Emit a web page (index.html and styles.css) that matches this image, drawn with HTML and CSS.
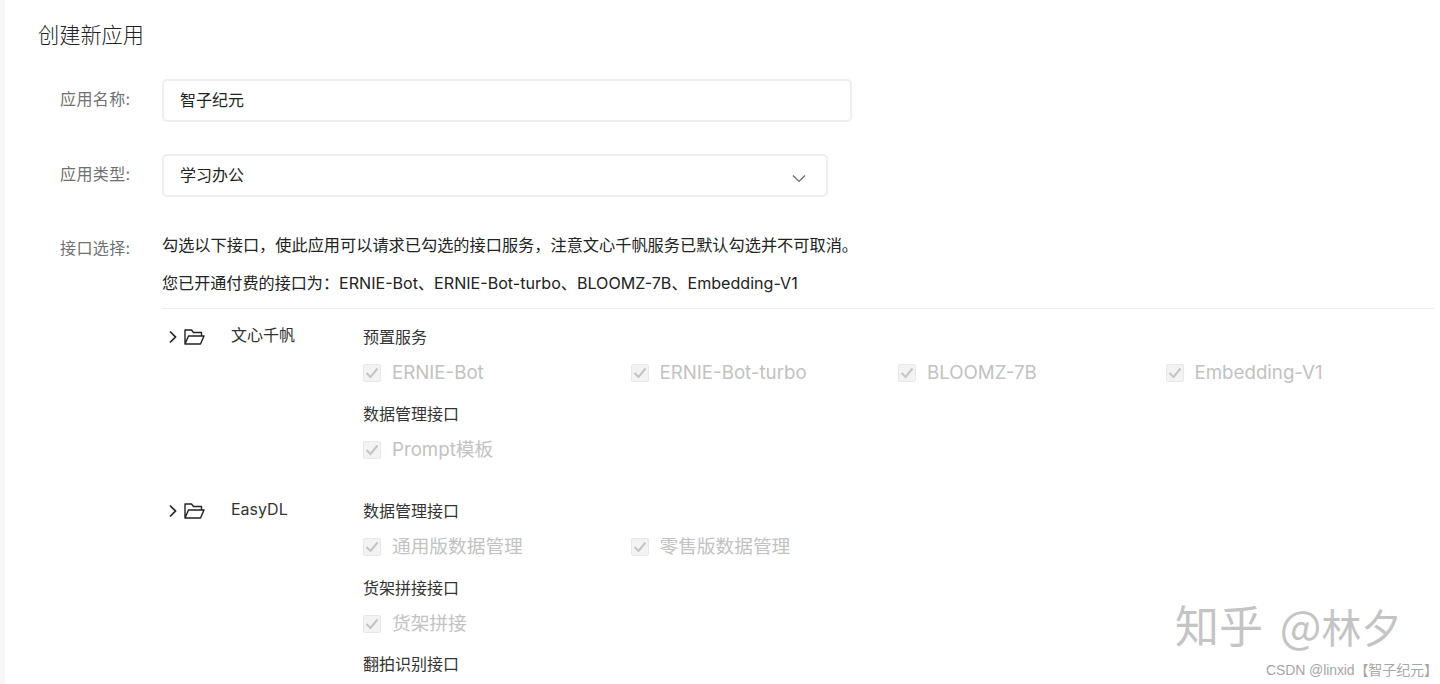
FILE: index.html
```html
<!DOCTYPE html>
<html lang="zh">
<head>
<meta charset="utf-8">
<title>创建新应用</title>
<link rel="stylesheet" href="styles.css">
</head>
<body>
<main class="page">
  <h1 class="title">创建新应用</h1>
  <div class="form-row name-row">
    <label class="label">应用名称:</label>
    <div class="input name-input">智子纪元</div>
  </div>
  <div class="form-row type-row">
    <label class="label">应用类型:</label>
    <div class="input type-input">学习办公
      <svg class="caret" width="14" height="9" viewBox="0 0 14 9"><path d="M1 1.5 7 7.5 13 1.5" fill="none" stroke="#666" stroke-width="1.2"/></svg>
    </div>
  </div>
  <div class="form-row api-row">
    <label class="label api-label">接口选择:</label>
    <div class="api-body">
      <p class="note first">勾选以下接口，使此应用可以请求已勾选的接口服务，注意文心千帆服务已默认勾选并不可取消。</p>
      <p class="note second">您已开通付费的接口为：ERNIE-Bot、ERNIE-Bot-turbo、BLOOMZ-7B、Embedding-V1</p>
      <section class="tree first-tree">
        <div class="tree-head">
          <svg class="chev" width="10" height="14" viewBox="0 0 10 14"><path d="M2 1.5 7.5 7 2 12.5" fill="none" stroke="#222" stroke-width="1.7"/></svg>
          <svg class="folder" width="21" height="16" viewBox="0 0 21 16"><path d="M1 15V1h6.5l2 2.5h8V7M1 15h15.5L20 7H4.5L1 15Z" fill="none" stroke="#222" stroke-width="1.4" stroke-linejoin="round"/></svg>
          <span class="tree-name">文心千帆</span>
        </div>
        <div class="groups">
          <h2 class="group-title">预置服务</h2>
          <div class="checks">
            <span class="check"><i class="box"><svg width="14" height="12" viewBox="0 0 14 12"><path d="M1.5 6 5.5 10 12.5 1.5" fill="none" stroke="#c4c4c4" stroke-width="2"/></svg></i>ERNIE-Bot</span>
            <span class="check"><i class="box"><svg width="14" height="12" viewBox="0 0 14 12"><path d="M1.5 6 5.5 10 12.5 1.5" fill="none" stroke="#c4c4c4" stroke-width="2"/></svg></i>ERNIE-Bot-turbo</span>
            <span class="check"><i class="box"><svg width="14" height="12" viewBox="0 0 14 12"><path d="M1.5 6 5.5 10 12.5 1.5" fill="none" stroke="#c4c4c4" stroke-width="2"/></svg></i>BLOOMZ-7B</span>
            <span class="check"><i class="box"><svg width="14" height="12" viewBox="0 0 14 12"><path d="M1.5 6 5.5 10 12.5 1.5" fill="none" stroke="#c4c4c4" stroke-width="2"/></svg></i>Embedding-V1</span>
          </div>
          <h2 class="group-title">数据管理接口</h2>
          <div class="checks">
            <span class="check"><i class="box"><svg width="14" height="12" viewBox="0 0 14 12"><path d="M1.5 6 5.5 10 12.5 1.5" fill="none" stroke="#c4c4c4" stroke-width="2"/></svg></i>Prompt模板</span>
          </div>
        </div>
      </section>
      <section class="tree second-tree">
        <div class="tree-head">
          <svg class="chev" width="10" height="14" viewBox="0 0 10 14"><path d="M2 1.5 7.5 7 2 12.5" fill="none" stroke="#222" stroke-width="1.7"/></svg>
          <svg class="folder" width="21" height="16" viewBox="0 0 21 16"><path d="M1 15V1h6.5l2 2.5h8V7M1 15h15.5L20 7H4.5L1 15Z" fill="none" stroke="#222" stroke-width="1.4" stroke-linejoin="round"/></svg>
          <span class="tree-name">EasyDL</span>
        </div>
        <div class="groups">
          <h2 class="group-title">数据管理接口</h2>
          <div class="checks">
            <span class="check"><i class="box"><svg width="14" height="12" viewBox="0 0 14 12"><path d="M1.5 6 5.5 10 12.5 1.5" fill="none" stroke="#c4c4c4" stroke-width="2"/></svg></i>通用版数据管理</span>
            <span class="check"><i class="box"><svg width="14" height="12" viewBox="0 0 14 12"><path d="M1.5 6 5.5 10 12.5 1.5" fill="none" stroke="#c4c4c4" stroke-width="2"/></svg></i>零售版数据管理</span>
          </div>
          <h2 class="group-title">货架拼接接口</h2>
          <div class="checks last-checks">
            <span class="check"><i class="box"><svg width="14" height="12" viewBox="0 0 14 12"><path d="M1.5 6 5.5 10 12.5 1.5" fill="none" stroke="#c4c4c4" stroke-width="2"/></svg></i>货架拼接</span>
          </div>
          <h2 class="group-title">翻拍识别接口</h2>
        </div>
      </section>
    </div>
  </div>
</main>
<div class="wm-zhihu">知乎 @<span class="wm-name">林夕</span></div>
<div class="wm-csdn">CSDN @linxid【智子纪元】</div>
</body>
</html>
```

FILE: styles.css
```css
* { box-sizing: border-box; }
html, body {
  margin: 0;
  height: 684px;
  overflow: hidden;
  background: #fff;
}
body {
  position: relative;
  font-family: Inter, "Noto Sans CJK SC", sans-serif;
  color: #222;
  border-left: 5px solid #f6f6f6;
}
.page { padding: 0 6px 0 33px; }
.title {
  margin: 0;
  padding-top: 20px;
  font-size: 21.2px;
  line-height: 30px;
  font-weight: 300;
  color: #222;
}
.form-row { display: flex; margin-left: 22px; }
.name-row { margin-top: 29px; }
.type-row { margin-top: 32px; }
.api-row { margin-top: 36px; }
.label {
  flex: none;
  width: 102px;
  font-size: 16px;
  letter-spacing: 0.4px;
  line-height: 41px;
  color: #707070;
}
.api-label { line-height: 30px; }
.input {
  height: 43px;
  padding-left: 16px;
  border: 2px solid #eeeeee;
  border-radius: 5px;
  font-size: 16px;
  line-height: 39px;
  color: #222;
}
.name-input { width: 690px; }
.type-input {
  width: 666px;
  display: flex;
  justify-content: space-between;
  align-items: center;
  padding-right: 20px;
}
.caret { margin-top: 6px; }
.api-body { flex: 1; min-width: 0; }
.note { margin: 0; font-size: 16px; line-height: 24px; color: #222; }
.first { font-size: 16.2px; }
.second { font-size: 16.1px; margin-top: 14px; padding-bottom: 13px; border-bottom: 1px solid #eeeeee; }
.tree { display: flex; }
.first-tree { margin-top: 16px; }
.second-tree { margin-top: 20px; }
.tree-head {
  flex: none;
  width: 201px;
  display: flex;
  align-items: flex-start;
  padding-left: 6px;
  height: 24px;
}
.chev { margin-top: 5px; }
.folder { margin: 4px 0 0 6px; }
.tree-name { margin-left: 26px; font-size: 16px; line-height: 20px; color: #333; }
.groups { flex: 1; min-width: 0; }
.group-title {
  margin: 0;
  font-size: 16px;
  line-height: 24px;
  font-weight: 400;
  color: #333;
}
.checks {
  display: grid;
  grid-template-columns: repeat(4, 267.5px);
  margin-top: 11px;
  margin-bottom: 16px;
}
.last-checks { margin-bottom: 15px; }
.check {
  display: flex;
  align-items: center;
  gap: 11px;
  font-size: 18.7px;
  line-height: 26px;
  color: #c2c2c2;
}
.box {
  flex: none;
  width: 18px;
  height: 18px;
  display: flex;
  align-items: center;
  justify-content: center;
  background: #f3f3f3;
  border: 1px solid #e8e8e8;
  border-radius: 2px;
}
.wm-zhihu {
  position: absolute;
  left: 1170px;
  top: 595px;
  font-size: 44px;
  line-height: 58px;
  font-weight: 400;
  word-spacing: 7px;
  white-space: nowrap;
  color: #c4c4c4;
  text-shadow: -1px -1px 0 #fff;
  font-family: "Noto Sans CJK SC", sans-serif;
}
.wm-name { font-size: 40px; }
.wm-csdn {
  position: absolute;
  left: 1261px;
  top: 660px;
  font-family: "Liberation Sans", "Noto Sans CJK SC", sans-serif;
  font-size: 14px;
  line-height: 20px;
  letter-spacing: -0.1px;
  white-space: nowrap;
  color: #a6a6a6;
}
```
